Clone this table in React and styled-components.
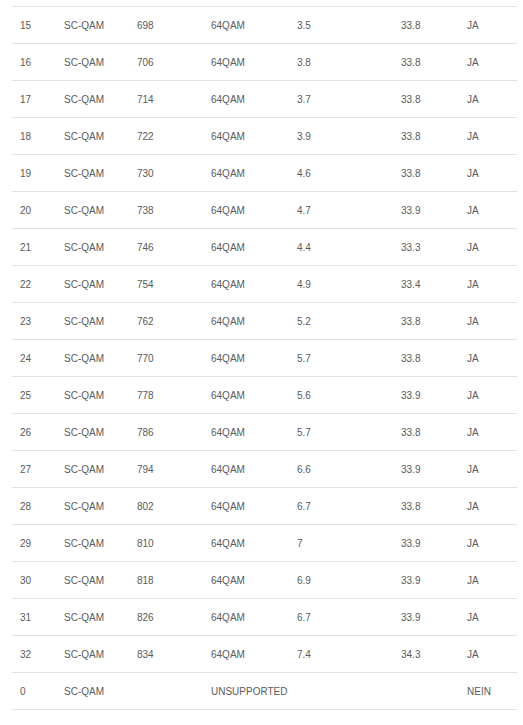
import React from 'react'
import styled, { createGlobalStyle } from 'styled-components'

const GlobalStyle = createGlobalStyle`
  body {
    margin: 0;
    background: #fff;
    font-family: 'Liberation Sans', Arial, sans-serif;
  }
`

const Wrapper = styled.div`
  padding: 6px 6px 0 12px;
`

const Table = styled.table`
  width: 505px;
  border-collapse: collapse;
  table-layout: fixed;
`

const Row = styled.tr`
  height: 37px;
  border-top: 1px solid #e2e2e2;
  border-bottom: 1px solid #e2e2e2;
`

const Cell = styled.td`
  box-sizing: border-box;
  padding: 0 0 0 8px;
  font-size: 10px;
  color: #5a5a5a;
  vertical-align: middle;
  white-space: nowrap;
`

const widths = [44, 73, 74, 86, 104, 66, 58]

const rows = [
  ['15', 'SC-QAM', '698', '64QAM', '3.5', '33.8', 'JA'],
  ['16', 'SC-QAM', '706', '64QAM', '3.8', '33.8', 'JA'],
  ['17', 'SC-QAM', '714', '64QAM', '3.7', '33.8', 'JA'],
  ['18', 'SC-QAM', '722', '64QAM', '3.9', '33.8', 'JA'],
  ['19', 'SC-QAM', '730', '64QAM', '4.6', '33.8', 'JA'],
  ['20', 'SC-QAM', '738', '64QAM', '4.7', '33.9', 'JA'],
  ['21', 'SC-QAM', '746', '64QAM', '4.4', '33.3', 'JA'],
  ['22', 'SC-QAM', '754', '64QAM', '4.9', '33.4', 'JA'],
  ['23', 'SC-QAM', '762', '64QAM', '5.2', '33.8', 'JA'],
  ['24', 'SC-QAM', '770', '64QAM', '5.7', '33.8', 'JA'],
  ['25', 'SC-QAM', '778', '64QAM', '5.6', '33.9', 'JA'],
  ['26', 'SC-QAM', '786', '64QAM', '5.7', '33.8', 'JA'],
  ['27', 'SC-QAM', '794', '64QAM', '6.6', '33.9', 'JA'],
  ['28', 'SC-QAM', '802', '64QAM', '6.7', '33.8', 'JA'],
  ['29', 'SC-QAM', '810', '64QAM', '7', '33.9', 'JA'],
  ['30', 'SC-QAM', '818', '64QAM', '6.9', '33.9', 'JA'],
  ['31', 'SC-QAM', '826', '64QAM', '6.7', '33.9', 'JA'],
  ['32', 'SC-QAM', '834', '64QAM', '7.4', '34.3', 'JA'],
  ['0', 'SC-QAM', '', 'UNSUPPORTED', '', '', 'NEIN'],
]

const App = () => {
  return (
    <Wrapper>
      <GlobalStyle />
      <Table>
        <colgroup>
          {widths.map((w, i) => (
            <col key={i} style={{ width: w }} />
          ))}
        </colgroup>
        <tbody>
          {rows.map((r, i) => (
            <Row key={i}>
              {r.map((c, j) => (
                <Cell key={j}>{c}</Cell>
              ))}
            </Row>
          ))}
        </tbody>
      </Table>
    </Wrapper>
  )
}

export default App
